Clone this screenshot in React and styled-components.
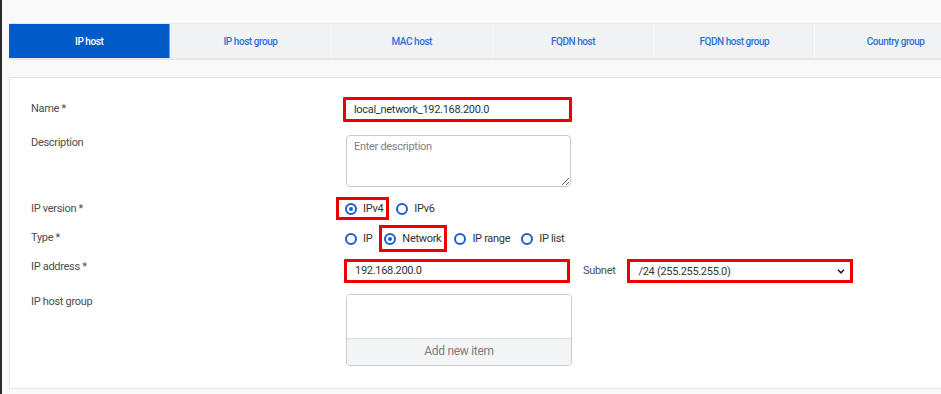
import React from "react";
import styled, { createGlobalStyle } from "styled-components";

const Global = createGlobalStyle`
  html, body { margin: 0; padding: 0; }
  body {
    background: #f9f9f9;
    font-family: Roboto, "Noto Sans", "Liberation Sans", sans-serif;
    overflow: hidden;
    height: 394px;
  }
  * { box-sizing: border-box; }
`;

const Page = styled.div`
  height: 394px;
  border-left: 2px solid #2a2a2a;
  padding: 23px 0 0 7px;
  overflow: hidden;
`;

const TabBar = styled.div`
  display: flex;
  width: 968px;
  border-top: 1px solid #e6e7e9;
  border-bottom: 2px solid #e6e7e9;
`;

const Tab = styled.div`
  flex: 0 0 161.3px;
  height: 34px;
  display: flex;
  align-items: center;
  justify-content: center;
  font-size: 10px;
  font-weight: 500;
  letter-spacing: -0.45px;
  color: ${(p) => (p.$active ? "#ffffff" : "#2f72d6")};
  background: ${(p) => (p.$active ? "#005bc8" : "#f1f2f4")};
  border-right: 1px solid ${(p) => (p.$active ? "#6fa3e6" : "#fafafa")};
`;

const Card = styled.div`
  margin-top: 17px;
  width: 968px;
  background: #ffffff;
  border: 1px solid #e4e4e4;
  padding: 19px 0 22px 21px;
  letter-spacing: -0.3px;
`;

const Row = styled.div`
  display: grid;
  grid-template-columns: 315px 1fr;
  margin-top: ${(p) => p.$mt || 0}px;
`;

const Label = styled.div`
  font-size: 11px;
  line-height: 14px;
  color: #4a4d52;
  padding-top: ${(p) => p.$pt || 0}px;
`;

const TextInput = styled.input`
  display: block;
  width: ${(p) => p.$w || 229}px;
  height: ${(p) => p.$h || 25}px;
  margin-left: ${(p) => p.$ml || 0}px;
  border: 3px solid #ee0000;
  border-radius: 1px;
  padding: 0 8px;
  font-family: inherit;
  font-size: 11px;
  letter-spacing: -0.3px;
  color: #333;
  background: #fff;
  outline: none;
`;

const TextArea = styled.textarea`
  display: block;
  width: 225px;
  height: 52px;
  border: 1px solid #c9cbcf;
  border-radius: 4px;
  padding: 4px 7px;
  font-family: inherit;
  font-size: 11px;
  letter-spacing: -0.3px;
  color: #333;
  outline: none;
  &::placeholder { color: #7d7f83; }
`;

const RadioRow = styled.div`
  display: flex;
  align-items: center;
  height: ${(p) => p.$h || 24}px;
  gap: 11px;
`;

const Option = styled.label`
  position: relative;
  display: flex;
  align-items: center;
  gap: 6px;
  font-size: 11px;
  line-height: 14px;
  color: #333;
  margin-left: ${(p) => p.$ml || 0}px;
  margin-right: ${(p) => p.$mr || 0}px;
  &::before {
    content: "";
    display: ${(p) => (p.$hl ? "block" : "none")};
    position: absolute;
    inset: ${(p) => p.$hl || "0"};
    border: 3px solid #ee0000;
  }
`;

const Radio = styled.span`
  width: 12px;
  height: 12px;
  border-radius: 50%;
  border: 2px solid #1b5fcc;
  display: flex;
  align-items: center;
  justify-content: center;
  &::after {
    content: "";
    width: 4px;
    height: 4px;
    border-radius: 50%;
    background: #1b5fcc;
    display: ${(p) => (p.$on ? "block" : "none")};
  }
`;

const AddrControls = styled.div`
  display: flex;
  align-items: center;
`;

const SubLabel = styled.span`
  font-size: 11px;
  color: #4a4d52;
  margin: 0 12px 0 13px;
`;

const SelectBox = styled.div`
  width: 226px;
  height: 24px;
  margin-top: 1px;
  border: 3px solid #ee0000;
  padding: 0 5px 0 8px;
  display: flex;
  align-items: center;
  justify-content: space-between;
  font-size: 11px;
  color: #333;
  background: #fff;
`;

const GroupBox = styled.div`
  width: 226px;
  height: 72px;
  border: 1px solid #c9cbcf;
  border-radius: 4px;
  display: flex;
  flex-direction: column;
  overflow: hidden;
`;

const GroupList = styled.div`
  flex: 1;
  background: #fff;
`;

const AddItem = styled.div`
  height: 27px;
  padding-bottom: 2px;
  border-top: 1px solid #dcdee1;
  background: #f3f4f5;
  display: flex;
  align-items: center;
  justify-content: center;
  font-size: 12px;
  color: #7a7c80;
`;

const tabs = ["IP host", "IP host group", "MAC host", "FQDN host", "FQDN host group", "Country group"];

export default function App() {
  return (
    <>
      <Global />
      <Page>
        <TabBar>
          {tabs.map((t, i) => (
            <Tab key={t} $active={i === 0}>{t}</Tab>
          ))}
        </TabBar>
        <Card>
          <Row>
            <Label $pt={5}>Name *</Label>
            <TextInput $ml={-3} readOnly defaultValue="local_network_192.168.200.0" />
          </Row>
          <Row $mt={13}>
            <Label $pt={1}>Description</Label>
            <TextArea placeholder="Enter description" />
          </Row>
          <Row $mt={10}>
            <Label $pt={5}>IP version *</Label>
            <RadioRow>
              <Option $ml={-1} $mr={2} $hl="-5px -6px -4px -9px"><Radio $on />IPv4</Option>
              <Option><Radio />IPv6</Option>
            </RadioRow>
          </Row>
          <Row $mt={5}>
            <Label $pt={5}>Type *</Label>
            <RadioRow $h={26}>
              <Option $ml={-1}><Radio />IP</Option>
              <Option $ml={1} $mr={2} $hl="-7px -6px -6px -5px"><Radio $on />Network</Option>
              <Option><Radio />IP range</Option>
              <Option><Radio />IP list</Option>
            </RadioRow>
          </Row>
          <Row $mt={6}>
            <Label $pt={2}>IP address *</Label>
            <AddrControls>
              <TextInput $ml={-2} $w={226} $h={24} readOnly defaultValue="192.168.200.0" />
              <SubLabel>Subnet</SubLabel>
              <SelectBox>
                <span>/24 (255.255.255.0)</span>
                <svg width="8" height="5" viewBox="0 0 8 5">
                  <path d="M1 0.8 L4 3.8 L7 0.8" fill="none" stroke="#222" strokeWidth="1.6" />
                </svg>
              </SelectBox>
            </AddrControls>
          </Row>
          <Row $mt={11}>
            <Label $pt={1}>IP host group</Label>
            <GroupBox>
              <GroupList />
              <AddItem>Add new item</AddItem>
            </GroupBox>
          </Row>
        </Card>
      </Page>
    </>
  );
}
